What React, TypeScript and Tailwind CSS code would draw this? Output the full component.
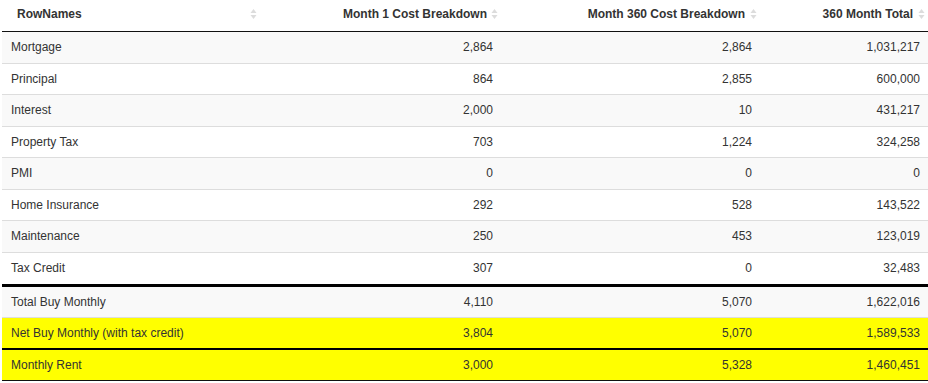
import React from "react";

const SortIcon = () => (
  <svg width="7" height="12" viewBox="0 0 7 12" className="absolute right-[5px] top-[8px]">
    <polygon points="0.5,5 3.5,1 6.5,5" fill="#dcdcdc" />
    <polygon points="0.5,7 3.5,11 6.5,7" fill="#dcdcdc" />
  </svg>
);

type Row = { name: string; a: string; b: string; c: string; cls: string };

const rows: Row[] = [
  { name: "Mortgage", a: "2,864", b: "2,864", c: "1,031,217", cls: "bg-[#f9f9f9] h-[31.5px] border-b border-[#dddddd]" },
  { name: "Principal", a: "864", b: "2,855", c: "600,000", cls: "bg-white h-[31.5px] border-b border-[#dddddd]" },
  { name: "Interest", a: "2,000", b: "10", c: "431,217", cls: "bg-[#f9f9f9] h-[31.5px] border-b border-[#dddddd]" },
  { name: "Property Tax", a: "703", b: "1,224", c: "324,258", cls: "bg-white h-[31.5px] border-b border-[#dddddd]" },
  { name: "PMI", a: "0", b: "0", c: "0", cls: "bg-[#f9f9f9] h-[31.5px] border-b border-[#dddddd]" },
  { name: "Home Insurance", a: "292", b: "528", c: "143,522", cls: "bg-white h-[31.5px] border-b border-[#dddddd]" },
  { name: "Maintenance", a: "250", b: "453", c: "123,019", cls: "bg-[#f9f9f9] h-[31.5px] border-b border-[#dddddd]" },
  { name: "Tax Credit", a: "307", b: "0", c: "32,483", cls: "bg-white h-[34.5px] border-b-[3px] border-black" },
  { name: "Total Buy Monthly", a: "4,110", b: "5,070", c: "1,622,016", cls: "bg-[#f9f9f9] h-[31px] border-b border-[#dddddd]" },
  { name: "Net Buy Monthly (with tax credit)", a: "3,804", b: "5,070", c: "1,589,533", cls: "bg-[#ffff00] h-[32px] border-b-2 border-black" },
  { name: "Monthly Rent", a: "3,000", b: "5,328", c: "1,460,451", cls: "bg-[#ffff00] h-[31px] border-b border-[#111111]" },
];

export default function App() {
  return (
    <div
      className="w-[928px] h-[383px] overflow-hidden bg-white text-[12px] text-[#333333]"
      style={{ fontFamily: '"Liberation Sans", Arial, sans-serif' }}
    >
      <div className="ml-[2px] w-[928px]">
        <div className="flex h-[32px] border-b border-[#111111] font-bold">
          <div className="relative w-[260px] flex items-center pl-[15px] pb-[3px]">
            RowNames
            <SortIcon />
          </div>
          <div className="relative w-[241px] flex items-center justify-end pr-[16px] pb-[3px]">
            Month 1 Cost Breakdown
            <SortIcon />
          </div>
          <div className="relative w-[259px] flex items-center justify-end pr-[17px] pb-[3px]">
            Month 360 Cost Breakdown
            <SortIcon />
          </div>
          <div className="relative w-[168px] flex items-center justify-end pr-[17px] pb-[3px]">
            360 Month Total
            <SortIcon />
          </div>
        </div>
        {rows.map((r) => (
          <div key={r.name} className={`flex ${r.cls}`}>
            <div className="w-[260px] flex items-center pl-[9px]">{r.name}</div>
            <div className="w-[241px] flex items-center justify-end pr-[10px]">{r.a}</div>
            <div className="w-[259px] flex items-center justify-end pr-[10px]">{r.b}</div>
            <div className="w-[168px] flex items-center justify-end pr-[10px]">{r.c}</div>
          </div>
        ))}
      </div>
    </div>
  );
}
